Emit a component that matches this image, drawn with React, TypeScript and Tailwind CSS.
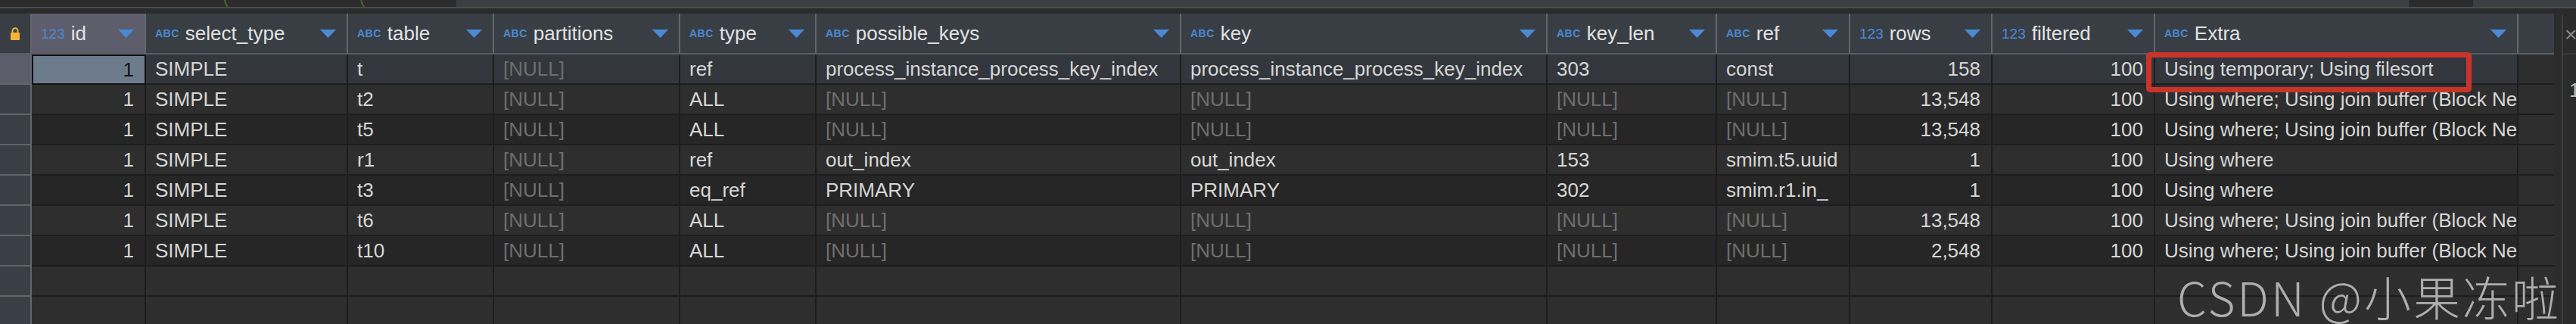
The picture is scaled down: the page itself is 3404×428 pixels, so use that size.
import React from "react";

type Col = { name: string; kind: "num" | "abc"; align: "left" | "right" };

const cols: Col[] = [
  { name: "id", kind: "num", align: "right" },
  { name: "select_type", kind: "abc", align: "left" },
  { name: "table", kind: "abc", align: "left" },
  { name: "partitions", kind: "abc", align: "left" },
  { name: "type", kind: "abc", align: "left" },
  { name: "possible_keys", kind: "abc", align: "left" },
  { name: "key", kind: "abc", align: "left" },
  { name: "key_len", kind: "abc", align: "left" },
  { name: "ref", kind: "abc", align: "left" },
  { name: "rows", kind: "num", align: "right" },
  { name: "filtered", kind: "num", align: "right" },
  { name: "Extra", kind: "abc", align: "left" },
];

const N = null;
const join = "Using where; Using join buffer (Block Nested Loop)";

const rows: (string | null)[][] = [
  ["1", "SIMPLE", "t", N, "ref", "process_instance_process_key_index", "process_instance_process_key_index", "303", "const", "158", "100", "Using temporary; Using filesort"],
  ["1", "SIMPLE", "t2", N, "ALL", N, N, N, N, "13,548", "100", join],
  ["1", "SIMPLE", "t5", N, "ALL", N, N, N, N, "13,548", "100", join],
  ["1", "SIMPLE", "r1", N, "ref", "out_index", "out_index", "153", "smim.t5.uuid", "1", "100", "Using where"],
  ["1", "SIMPLE", "t3", N, "eq_ref", "PRIMARY", "PRIMARY", "302", "smim.r1.in_", "1", "100", "Using where"],
  ["1", "SIMPLE", "t6", N, "ALL", N, N, N, N, "13,548", "100", join],
  ["1", "SIMPLE", "t10", N, "ALL", N, N, N, N, "2,548", "100", join],
];

const grid =
  "grid grid-cols-[42px_151px_267px_193px_246px_180px_482px_484px_224px_176px_188px_215px_480px_47px]";

function Lock() {
  return (
    <svg width="14" height="17" viewBox="0 0 14 17">
      <path d="M3.5 7V4.8a3.5 3.5 0 0 1 7 0V7" fill="none" stroke="#f2b43a" strokeWidth="2" />
      <rect x="1" y="7" width="12" height="10" rx="1" fill="#f2b43a" />
    </svg>
  );
}

function Caret() {
  return (
    <svg width="21" height="11" viewBox="0 0 21 11" className="shrink-0">
      <path d="M0 0H21L10.5 11Z" fill="#4a8ad4" />
    </svg>
  );
}

function TypeTag({ kind }: { kind: "num" | "abc" }) {
  if (kind === "num") {
    return <span className="text-[19px] leading-none text-[#4a8ad4] mr-2 shrink-0">123</span>;
  }
  return (
    <span className="text-[14px] leading-none font-bold text-[#4a8ad4] mr-2 tracking-[0.5px] shrink-0">ABC</span>
  );
}

export default function App() {
  return (
    <div
      className="w-[3404px] h-[428px] bg-[#2b2b2b] overflow-hidden relative flex flex-col"
      style={{ fontFamily: '"Liberation Sans", Arial, sans-serif' }}
    >
      {/* top toolbar remnant */}
      <div className="h-[9px] flex shrink-0 overflow-hidden">
        <div className="w-[603px] bg-[#2b2b2b] overflow-hidden">
          <div className="text-[22px] leading-none text-[#3f6e25] whitespace-nowrap -mt-[14px] pl-[140px] tracking-[6px]">
            ~ ~ ~ ~ ~ ( ~ ~ ~ ~ ~ ( ~ ~ ~ ~ ~ ~ ~ ~ ~ ~
          </div>
        </div>
        <div className="flex-1 bg-[#3c3f41] flex justify-end">
          <div className="w-[85px] bg-[#2b2b2b] mr-[136px]" />
        </div>
      </div>
      <div className="h-[2px] bg-[#4a4c4f] shrink-0" />
      <div className="h-[7px] bg-[#2b2b2b] shrink-0" />

      <div className="flex flex-1 min-h-0">
        <div className="w-[3375px] shrink-0 text-[26px] text-[#d6d6d6]">
          {/* header */}
          <div className={`${grid} h-[54px] bg-[#393e45] border-b-2 border-[#5a5d62]`}>
            <div className="flex items-center justify-center border-r-2 border-[#63666b]">
              <Lock />
            </div>
            {cols.map((c, i) => (
              <div
                key={c.name}
                className={`flex items-center pl-3 pr-[14px] border-r-2 border-[#63666b] ${
                  i === 0 ? "bg-[#5e5d6c]" : ""
                }`}
              >
                <TypeTag kind={c.kind} />
                <span className="flex-1 text-[#e2e2e2] whitespace-nowrap">{c.name}</span>
                <Caret />
              </div>
            ))}
            <div />
          </div>

          {/* data rows */}
          {[...rows, null, null].map((r, ri) => {
            const first = ri === 0;
            const bg = first ? "bg-[#33373d]" : ri % 2 === 0 ? "bg-[#262626]" : "bg-[#2e2e2e]";
            return (
              <div key={ri} className={`${grid} h-[40px] ${ri >= 7 ? "bg-[#2e2e2e]" : bg}`}>
                <div
                  className={`border-r-2 border-b-2 border-[#62666b] ${first ? "bg-[#5e5d6c]" : "bg-[#3a3f47]"}`}
                />
                {cols.map((c, ci) => {
                  const v = r ? r[ci] : undefined;
                  const selected = first && ci === 0;
                  return (
                    <div
                      key={c.name}
                      className={`flex items-center pl-3 min-w-0 overflow-hidden whitespace-nowrap ${
                        c.align === "right" ? "justify-end pr-[14px]" : "pr-0"
                      } ${
                        selected
                          ? "bg-[#6d7c8c] border-2 border-[#111111] text-[#151515]"
                          : "border-r-2 border-b-2 border-[#1d1d1d]"
                      }`}
                    >
                      {v === null ? <span className="text-[#6e6e6e]">[NULL]</span> : v}
                    </div>
                  );
                })}
                <div className="border-b-2 border-[#1d1d1d] bg-[#2e2e2e]" />
              </div>
            );
          })}
        </div>

        {/* right panel */}
        <div className="w-[10px] shrink-0" />
        <div className="flex-1 mt-[2px] border-l-2 border-[#3f3f3f] bg-[#2b2b2b] flex flex-col overflow-hidden">
          <div className="h-[52px] border-b-2 border-[#3a3a3a] text-[#8a8a8a] text-[28px] leading-[52px] pl-[2px]">×</div>
          <div className="mt-[28px] text-[#bdbdbd] text-[26px] pl-[8px]">1</div>
        </div>
      </div>

      {/* highlight box */}
      <div className="absolute left-[2836px] top-[69px] w-[430px] h-[53px] border-[7px] border-[#c8342a] rounded-[5px]" />

      {/* watermark */}
      <div
        className="absolute left-[2877px] top-[360px] text-[62px] leading-none text-[#c4c4c4]/85 whitespace-nowrap font-light tracking-[3px]"
        style={{ fontFamily: '"Noto Sans CJK SC", "Liberation Sans", sans-serif' }}
      >
        CSDN @小果冻啦
      </div>
    </div>
  );
}
